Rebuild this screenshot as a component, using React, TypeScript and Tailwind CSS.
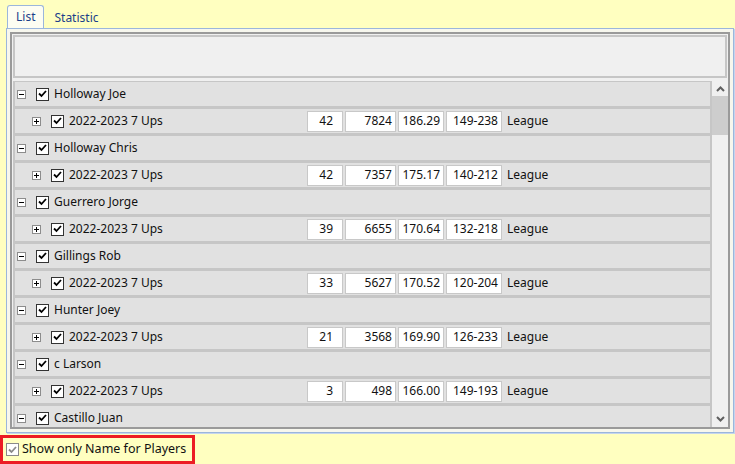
import React from "react";

type Player = {
  name: string;
  season: string;
  games: string;
  pins: string;
  avg: string;
  range: string;
};

const players: Player[] = [
  { name: "Holloway Joe", season: "2022-2023 7 Ups", games: "42", pins: "7824", avg: "186.29", range: "149-238" },
  { name: "Holloway Chris", season: "2022-2023 7 Ups", games: "42", pins: "7357", avg: "175.17", range: "140-212" },
  { name: "Guerrero Jorge", season: "2022-2023 7 Ups", games: "39", pins: "6655", avg: "170.64", range: "132-218" },
  { name: "Gillings Rob", season: "2022-2023 7 Ups", games: "33", pins: "5627", avg: "170.52", range: "120-204" },
  { name: "Hunter Joey", season: "2022-2023 7 Ups", games: "21", pins: "3568", avg: "169.90", range: "126-233" },
  { name: "c Larson", season: "2022-2023 7 Ups", games: "3", pins: "498", avg: "166.00", range: "149-193" },
];

function Check({ gray }: { gray?: boolean }) {
  return (
    <span
      className={`flex h-[13px] w-[13px] shrink-0 items-center justify-center border ${
        gray ? "border-[#8a8a8a] bg-white" : "border-[#333] bg-white"
      }`}
    >
      <svg width="9" height="8" viewBox="0 0 9 8">
        <path
          d="M1 3.5 L3.5 6 L8 1"
          fill="none"
          stroke={gray ? "#8a8a8a" : "#000"}
          strokeWidth="1.8"
        />
      </svg>
    </span>
  );
}

function Expander({ open }: { open: boolean }) {
  return (
    <span className="relative flex h-[9px] w-[9px] shrink-0 items-center justify-center border border-[#8c8c8c] bg-white">
      <span className="absolute h-px w-[5px] bg-black" />
      {!open && <span className="absolute h-[5px] w-px bg-black" />}
    </span>
  );
}

function Cell({ children, w }: { children: React.ReactNode; w: string }) {
  return (
    <div className={`flex h-[21px] items-center justify-end border border-[#c8c8c8] bg-white pr-[3px] ${w}`}>
      {children}
    </div>
  );
}

function PlayerRow({ name }: { name: string }) {
  return (
    <div className="-mt-px flex h-[28px] items-center border-2 border-[#c6c6c6] bg-[#e1e1e1] pl-[2px]">
      <Expander open />
      <span className="ml-[10px]">
        <Check />
      </span>
      <span className="ml-[5px]">{name}</span>
    </div>
  );
}

function SeasonRow({ p }: { p: Player }) {
  return (
    <div className="-mt-px flex h-[28px] items-center border-2 border-[#c6c6c6] bg-[#e1e1e1] pl-[17px]">
      <Expander open={false} />
      <span className="ml-[10px]">
        <Check />
      </span>
      <span className="ml-[5px] w-[238px]">{p.season}</span>
      <div className="flex gap-[2px]">
        <Cell w="w-[36px]">
          <span className="mr-[6px]">{p.games}</span>
        </Cell>
        <Cell w="w-[51px]">{p.pins}</Cell>
        <Cell w="w-[46px]">{p.avg}</Cell>
        <Cell w="w-[56px]">{p.range}</Cell>
      </div>
      <span className="ml-[5px]">League</span>
    </div>
  );
}

export default function App() {
  return (
    <div
      className="flex h-[464px] w-[735px] flex-col overflow-hidden bg-[#ffffc0] text-[12px] text-[#111]"
      style={{ fontFamily: '"Noto Sans", "DejaVu Sans", sans-serif' }}
    >
      {/* tabs */}
      <div className="flex h-[28px] items-end pl-[7px]">
        <div className="flex h-[23px] items-center rounded-t-[3px] border border-b-0 border-[#9bb6dc] bg-[#fdfdf2] px-[8px] text-[#1b3f8a]">
          List
        </div>
        <div className="flex h-[21px] items-center px-[10px] text-[#1b3f8a]">Statistic</div>
      </div>

      {/* panel */}
      <div className="mr-[1px] ml-[6px] h-[405px] border border-[#9bb6dc] bg-[#f7f7ee] p-[3px] shadow-[1px_1px_0_#c5d5ee]">
        <div className="flex h-full flex-col border-2 border-[#9a9a9a] bg-[#f0f0f0]">
          <div className="mx-[1px] mt-[1px] h-[43px] shrink-0 border-2 border-[#c6c6c6] bg-[#f0f0f0]" />
          <div className="mt-[3px] flex min-h-0 flex-1">
            <div className="flex-1 overflow-hidden pl-[1px]">
              <div className="-mt-px">
                {players.map((p) => (
                  <React.Fragment key={p.name}>
                    <PlayerRow name={p.name} />
                    <SeasonRow p={p} />
                  </React.Fragment>
                ))}
                <PlayerRow name="Castillo Juan" />
              </div>
            </div>
            {/* scrollbar */}
            <div className="flex w-[16px] shrink-0 flex-col bg-[#f0f0f0]">
              <div className="flex h-[15px] items-center justify-center">
                <svg width="9" height="6" viewBox="0 0 9 6">
                  <path d="M1 5 L4.5 1.5 L8 5" fill="none" stroke="#606060" strokeWidth="2" />
                </svg>
              </div>
              <div className="h-[39px] bg-[#cdcdcd]" />
              <div className="flex-1" />
              <div className="flex h-[17px] items-center justify-center">
                <svg width="9" height="6" viewBox="0 0 9 6">
                  <path d="M1 1 L4.5 4.5 L8 1" fill="none" stroke="#606060" strokeWidth="2" />
                </svg>
              </div>
            </div>
          </div>
        </div>
      </div>

      {/* option */}
      <div className="mt-[2px] flex">
        <div className="flex h-[29px] items-center gap-[3px] border-[3px] border-[#ec1c24] pl-[3px] pr-[6px]">
          <Check gray />
          <span className="text-[12.5px]">Show only Name for Players</span>
        </div>
      </div>
    </div>
  );
}
